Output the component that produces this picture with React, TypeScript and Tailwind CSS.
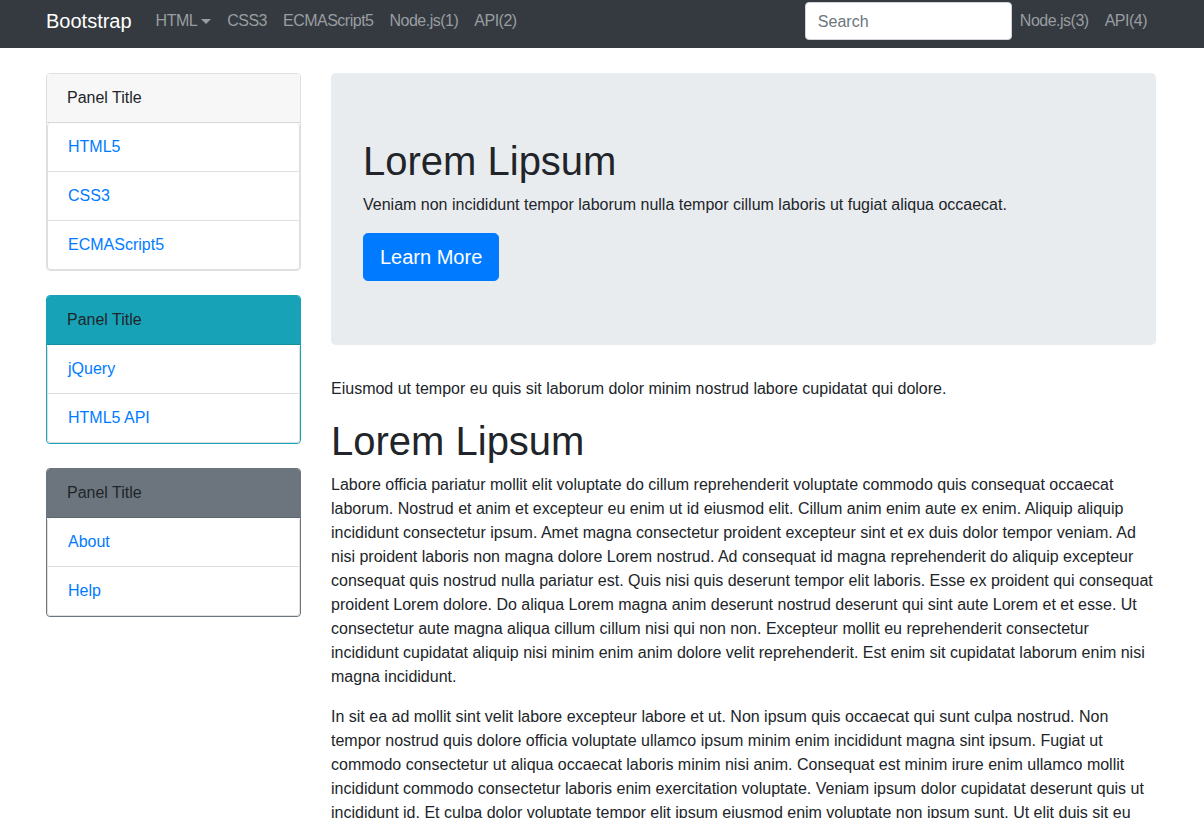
const navLeft = ["CSS3", "ECMAScript5", "Node.js(1)", "API(2)"]
const navRight = ["Node.js(3)", "API(4)"]

const panels = [
  {
    card: "border-[#dfdfdf]",
    header: "bg-[#f7f7f7]",
    items: ["HTML5", "CSS3", "ECMAScript5"],
  },
  {
    card: "border-[#17a2b8]",
    header: "bg-[#17a2b8]",
    items: ["jQuery", "HTML5 API"],
  },
  {
    card: "border-[#6c757d]",
    header: "bg-[#6c757d]",
    items: ["About", "Help"],
  },
]

function Navbar() {
  return (
    <nav className="h-12 bg-[#343a40]">
      <div className="mx-auto flex h-[42px] w-[1142px] items-center pl-[15px] pr-[18px]">
        <a className="mr-4 text-[20px] leading-[30px] text-white">Bootstrap</a>
        <a className="flex items-center px-2 tracking-[-0.5px] text-[#9a9da0]">
          HTML
          <span className="ml-[4px] inline-block h-0 w-0 border-x-[5px] border-t-[5px] border-x-transparent border-t-[#9a9da0]" />
        </a>
        {navLeft.map((l) => (
          <a key={l} className="px-2 tracking-[-0.5px] text-[#9a9da0]">
            {l}
          </a>
        ))}
        <input
          placeholder="Search"
          className="ml-auto h-[38px] w-[207px] rounded border border-[#ced4da] bg-white px-3 pt-[2px] text-[#495057] placeholder:text-[#6c757d] outline-none"
        />
        {navRight.map((l) => (
          <a key={l} className="px-2 tracking-[-0.5px] text-[#9a9da0]">
            {l}
          </a>
        ))}
      </div>
    </nav>
  )
}

function Panel({ card, header, items }: { card: string; header: string; items: string[] }) {
  return (
    <div className={`mb-6 overflow-hidden rounded border ${card}`}>
      <div className={`border-b border-black/[0.125] px-5 py-3 ${header}`}>Panel Title</div>
      <div className="rounded-[4px] border-x border-b border-black/[0.125] bg-white">
        {items.map((it, i) => (
          <a key={it} className={`block px-5 py-3 text-[#007bff] ${i > 0 ? "border-t border-black/[0.125]" : ""}`}>
            {it}
          </a>
        ))}
      </div>
    </div>
  )
}

export default function App() {
  return (
    <div className="min-h-screen bg-white font-['Liberation_Sans',Arial,sans-serif] text-base leading-6 text-[#212529]">
      <Navbar />
      <div className="mx-auto grid w-[1142px] grid-cols-[255px_825px] gap-[30px] px-[15px] pt-[25px]">
        <aside>
          {panels.map((p, i) => (
            <Panel key={i} {...p} />
          ))}
        </aside>
        <main>
          <div className="mb-8 rounded-[0.3rem] bg-[#e9ecef] px-8 py-16">
            <h1 className="mb-2 text-[40px] font-medium leading-[48px]">Lorem Lipsum</h1>
            <p className="mb-4">
              Veniam non incididunt tempor laborum nulla tempor cillum laboris ut fugiat aliqua occaecat.
            </p>
            <button className="rounded-[0.3rem] border border-[#007bff] bg-[#007bff] px-4 py-2 text-[20px] leading-[30px] text-white">
              Learn More
            </button>
          </div>
          <p className="mb-4">
            Eiusmod ut tempor eu quis sit laborum dolor minim nostrud labore cupidatat qui dolore.
          </p>
          <h1 className="mb-2 text-[40px] font-medium leading-[48px]">Lorem Lipsum</h1>
          <p className="mb-4">
            Labore officia pariatur mollit elit voluptate do cillum reprehenderit voluptate commodo quis consequat
            occaecat laborum. Nostrud et anim et excepteur eu enim ut id eiusmod elit. Cillum anim enim aute ex enim.
            Aliquip aliquip incididunt consectetur ipsum. Amet magna consectetur proident excepteur sint et ex duis
            dolor tempor veniam. Ad nisi proident laboris non magna dolore Lorem nostrud. Ad consequat id magna
            reprehenderit do aliquip excepteur consequat quis nostrud nulla pariatur est. Quis nisi quis deserunt
            tempor elit laboris. Esse ex proident qui consequat proident Lorem dolore. Do aliqua Lorem magna anim
            deserunt nostrud deserunt qui sint aute Lorem et et esse. Ut consectetur aute magna aliqua cillum cillum
            nisi qui non non. Excepteur mollit eu reprehenderit consectetur incididunt cupidatat aliquip nisi minim
            enim anim dolore velit reprehenderit. Est enim sit cupidatat laborum enim nisi magna incididunt.
          </p>
          <p className="mb-4">
            In sit ea ad mollit sint velit labore excepteur labore et ut. Non ipsum quis occaecat qui sunt culpa
            nostrud. Non tempor nostrud quis dolore officia voluptate ullamco ipsum minim enim incididunt magna sint
            ipsum. Fugiat ut commodo consectetur ut aliqua occaecat laboris minim nisi anim. Consequat est minim irure
            enim ullamco mollit incididunt commodo consectetur laboris enim exercitation voluptate. Veniam ipsum dolor
            cupidatat deserunt quis ut incididunt id. Et culpa dolor voluptate tempor elit ipsum eiusmod enim voluptate
            non ipsum sunt. Ut elit duis sit eu officia.
          </p>
        </main>
      </div>
    </div>
  )
}
